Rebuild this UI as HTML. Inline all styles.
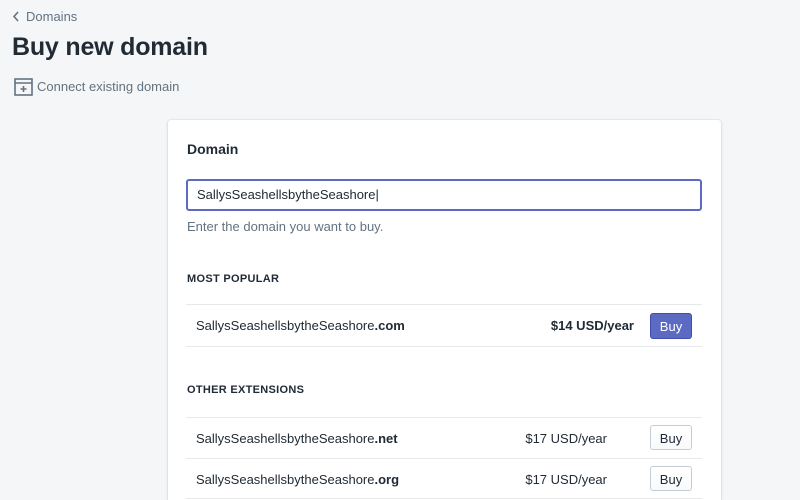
<!DOCTYPE html>
<html style="overflow:hidden;height:500px"><head><style>
body{margin:0;width:800px;height:500px;background:#f4f6f8;font-family:"Liberation Sans",sans-serif;position:relative;overflow:hidden;color:#212b36}
.a{position:absolute}
.card{left:168px;top:120px;width:553px;height:380px;background:#fff;border-radius:3px 3px 0 0;box-shadow:0 0 0 1px rgba(63,63,68,.05),0 1px 3px rgba(63,63,68,.15)}
.line{position:absolute;left:186px;width:516px;height:1px;background:#e6e9ec}
.dom{position:absolute;left:196px;font-size:13px;color:#212b36}
.btn{position:absolute;left:650px;width:42px;height:25px;border:1px solid #c4cdd5;border-radius:3px;background:linear-gradient(#fff,#f9fafb);font-size:13px;text-align:center;line-height:25px;box-sizing:border-box}
.price{position:absolute;right:193px;font-size:13px}
</style></head><body>
<svg class="a" style="left:12px;top:11px" width="8" height="11" viewBox="0 0 8 11"><path d="M6 1L2 5.5 6 10" fill="none" stroke="#637381" stroke-width="1.6"/></svg>
<div class="a" style="left:26px;top:9px;font-size:13px;color:#637381">Domains</div>
<div class="a" style="left:12px;top:33px;font-size:25px;font-weight:bold;letter-spacing:-0.2px">Buy new domain</div>
<svg class="a" style="left:14px;top:78px" width="20" height="19" viewBox="0 0 20 19"><rect x="1" y="1" width="17" height="16" fill="none" stroke="#637381" stroke-width="1.6"/><line x1="1" y1="5" x2="18" y2="5" stroke="#637381" stroke-width="1.6"/><path d="M9.5 8v6M6.5 11h6" stroke="#637381" stroke-width="1.6"/></svg>
<div class="a" style="left:37px;top:79px;font-size:13px;color:#637381">Connect existing domain</div>
<div class="a card"></div>
<div class="a" style="left:187px;top:141px;font-size:14px;font-weight:bold">Domain</div>
<div class="a" style="left:186px;top:179px;width:516px;height:32px;box-sizing:border-box;border:2px solid #5c6ac4;border-radius:3px;font-size:13px;line-height:28px;padding-left:9px">SallysSeashellsbytheSeashore|</div>
<div class="a" style="left:187px;top:219px;font-size:13px;color:#637381">Enter the domain you want to buy.</div>
<div class="a" style="left:187px;top:273px;font-size:11px;font-weight:bold;letter-spacing:.3px">MOST POPULAR</div>
<div class="line" style="top:304px"></div>
<div class="dom" style="top:318px">SallysSeashellsbytheSeashore<b>.com</b></div>
<div class="a" style="right:166px;top:318px;font-size:13px;font-weight:bold">$14 USD/year</div>
<div class="btn" style="top:313px;background:#5c6ac4;border-color:#3f4eae;color:#fff;height:26px">Buy</div>
<div class="line" style="top:346px"></div>
<div class="a" style="left:187px;top:384px;font-size:11px;font-weight:bold;letter-spacing:.3px">OTHER EXTENSIONS</div>
<div class="line" style="top:417px"></div>
<div class="dom" style="top:431px">SallysSeashellsbytheSeashore<b>.net</b></div>
<div class="price" style="top:431px">$17 USD/year</div>
<div class="btn" style="top:425px">Buy</div>
<div class="line" style="top:458px"></div>
<div class="dom" style="top:472px">SallysSeashellsbytheSeashore<b>.org</b></div>
<div class="price" style="top:472px">$17 USD/year</div>
<div class="btn" style="top:466px">Buy</div>
<div class="line" style="top:498px"></div>
</body></html>
